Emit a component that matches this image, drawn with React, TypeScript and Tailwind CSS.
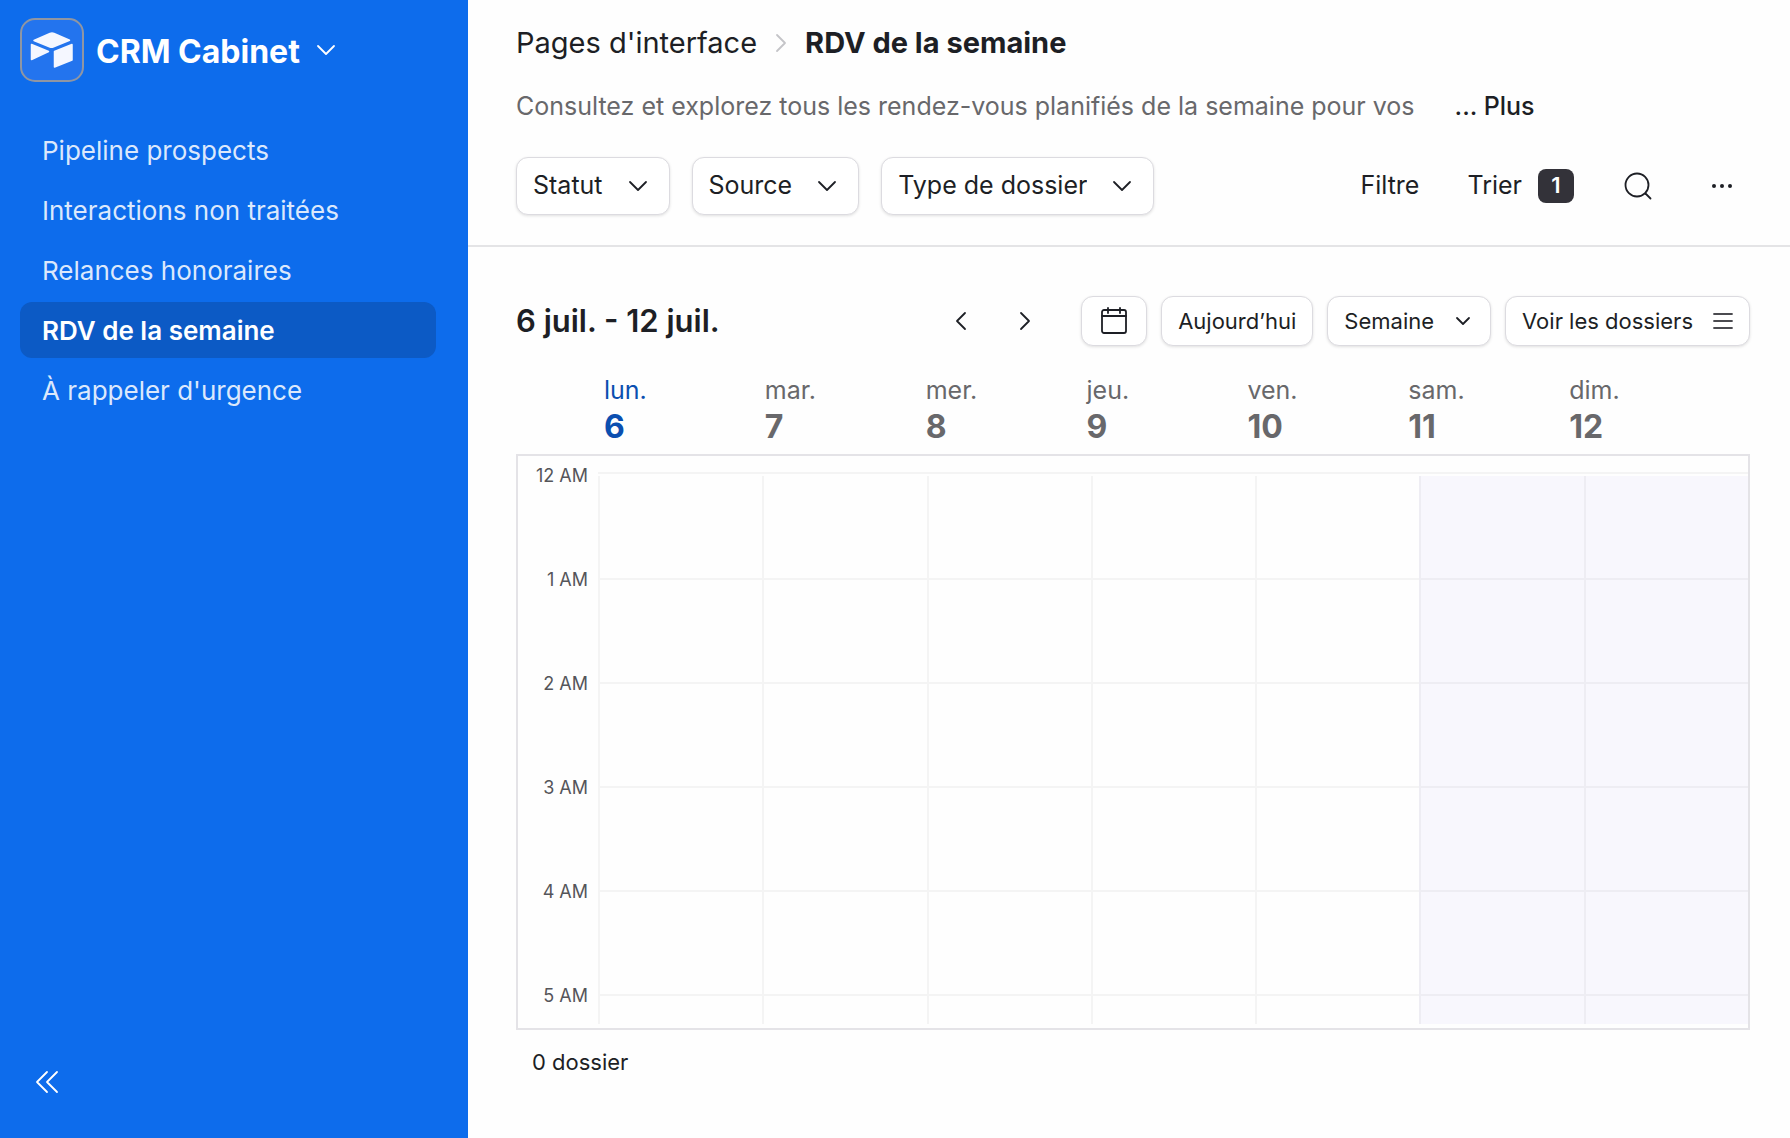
import { ReactNode } from "react";

const pages = [
  "Pipeline prospects",
  "Interactions non traitées",
  "Relances honoraires",
  "RDV de la semaine",
  "À rappeler d'urgence",
];

const filters = ["Statut", "Source", "Type de dossier"];

const days = [
  { name: "lun.", date: 6 },
  { name: "mar.", date: 7 },
  { name: "mer.", date: 8 },
  { name: "jeu.", date: 9 },
  { name: "ven.", date: 10 },
  { name: "sam.", date: 11 },
  { name: "dim.", date: 12 },
];

const hours = ["12 AM", "1 AM", "2 AM", "3 AM", "4 AM", "5 AM"];

const outlined = "rounded-xl border border-[#dcdbe0] bg-white shadow-[0_1px_3px_rgba(0,0,0,0.12)]";

function Icon({ w, h, className = "", children }: { w: number; h: number; className?: string; children: ReactNode }) {
  return (
    <svg
      width={w}
      height={h}
      viewBox={`0 0 ${w} ${h}`}
      fill="none"
      stroke="currentColor"
      strokeWidth="1.8"
      strokeLinecap="round"
      strokeLinejoin="round"
      className={"shrink-0 " + className}
      aria-hidden="true"
    >
      {children}
    </svg>
  );
}

function Sidebar() {
  return (
    <aside className="flex w-[468px] shrink-0 flex-col bg-[#0d6cec] pr-8 pl-5 text-white">
      <button type="button" className="mt-[18px] flex h-16 items-center gap-3 self-start">
        <svg width="64" height="64" viewBox="0 0 64 64" aria-hidden="true">
          <rect x="1" y="1" width="62" height="62" rx="14" fill="#2374ee" stroke="#8f96a3" strokeWidth="2" />
          <g fill="#f5f7ff" stroke="#f5f7ff" strokeWidth="1.5" strokeLinejoin="round">
            <path d="M14 22.5 30 15.500Q32 14.700 34 15.500L49.500 22.200 33 29Q31.500 29.600 30 29Z" />
            <path d="M11.500 26.500 28.500 33.500 11.500 41.500Z" />
            <path d="M34.500 33.500 52 26.500V42L34.500 49Z" />
          </g>
        </svg>
        <span className="pt-1 text-[32px] font-bold">CRM Cabinet</span>
        <Icon w={20} h={12} className="ml-1">
          <path d="m2 2 8 8 8-8" />
        </Icon>
      </button>

      <nav className="mt-10 flex flex-col gap-1">
        {pages.map((page) => (
          <a
            key={page}
            href="#"
            className={
              "flex h-14 items-center rounded-xl px-[22px] text-[26px] " +
              (page === "RDV de la semaine" ? "bg-[#0c5ac5] font-semibold" : "text-[#dbe8fc]")
            }
          >
            {page}
          </a>
        ))}
      </nav>

      <button type="button" aria-label="Réduire la barre latérale" className="mt-auto mb-11 ml-[15px] self-start">
        <Icon w={24} h={24}>
          <path d="M12 2 2 12l10 10M22 2 12 12l10 10" />
        </Icon>
      </button>
    </aside>
  );
}

function Header() {
  return (
    <header className="shrink-0 border-b-2 border-[#e4e4e6] pr-14 pl-12">
      <div className="flex h-[86px] items-center text-[29px]">
        <a href="#">Pages d'interface</a>
        <Icon w={12} h={20} className="mx-[18px] text-[#c4c4c8]">
          <path d="m2 2 8 8-8 8" />
        </Icon>
        <h1 className="font-bold">RDV de la semaine</h1>
      </div>
      <p className="flex h-[42px] items-center gap-10 text-[25px] whitespace-nowrap text-[#68686b]">
        Consultez et explorez tous les rendez-vous planifiés de la semaine pour vos
        <button type="button" className="font-medium text-[#1d1f25]">... Plus</button>
      </p>

      <div className="flex h-[117px] items-center pb-[2px]">
        <div className="flex gap-[22px]">
          {filters.map((filter) => (
            <div key={filter} className="relative flex items-center">
              <select
                aria-label={filter}
                className={"field-sizing-content h-[58px] appearance-none pr-[66px] pl-4 text-[25px] " + outlined}
              >
                <option>{filter}</option>
              </select>
              <Icon w={20} h={12} className="pointer-events-none absolute right-[22px]">
                <path d="m2 2 8 8 8-8" />
              </Icon>
            </div>
          ))}
        </div>
        <div className="ml-auto flex items-center text-[25px]">
          <button type="button">Filtre</button>
          <button type="button" className="ml-12 flex items-center gap-4">
            Trier
            <span className="flex h-[34px] w-9 items-center justify-center rounded-lg bg-[#333239] text-[22px] font-semibold text-white">
              1
            </span>
          </button>
          <button type="button" aria-label="Rechercher" className="ml-12">
            <Icon w={30} h={30}>
              <circle cx="15" cy="14" r="11.500" />
              <path d="m23.500 22.500 5 5" />
            </Icon>
          </button>
          <button type="button" aria-label="Plus d'options" className="ml-[58px]">
            <svg width="24" height="24" viewBox="0 0 24 24" fill="currentColor" aria-hidden="true">
              <circle cx="4" cy="12" r="2" />
              <circle cx="12" cy="12" r="2" />
              <circle cx="20" cy="12" r="2" />
            </svg>
          </button>
        </div>
      </div>
    </header>
  );
}

function Toolbar() {
  return (
    <div className="mt-12 flex h-[52px] items-center">
      <h2 className="text-[31px] font-semibold">6 juil. - 12 juil.</h2>
      <div className="ml-auto flex items-center gap-[14px] text-[22px]">
        <div className="mr-9 flex gap-[52px]">
          <button type="button" aria-label="Semaine précédente">
            <Icon w={12} h={20}>
              <path d="m10 2-8 8 8 8" />
            </Icon>
          </button>
          <button type="button" aria-label="Semaine suivante">
            <Icon w={12} h={20}>
              <path d="m2 2 8 8-8 8" />
            </Icon>
          </button>
        </div>
        <button type="button" aria-label="Choisir une date" className={"flex h-[50px] w-[66px] items-center justify-center " + outlined}>
          <Icon w={26} h={28}>
            <rect x="1" y="3" width="24" height="23" rx="2" />
            <path d="M1 9h24M7 1v5M19 1v5" />
          </Icon>
        </button>
        <button type="button" className={"h-[50px] px-4 " + outlined}>Aujourd’hui</button>
        <div className="relative flex items-center">
          <select aria-label="Période" className={"field-sizing-content h-[50px] appearance-none pr-14 pl-4 " + outlined}>
            <option>Semaine</option>
          </select>
          <Icon w={16} h={10} className="pointer-events-none absolute right-5">
            <path d="m2 2 6 6 6-6" />
          </Icon>
        </div>
        <button type="button" className={"flex h-[50px] items-center gap-5 px-4 " + outlined}>
          Voir les dossiers
          <Icon w={20} h={16} className="text-[#4b4b50]">
            <path d="M1 1h18M1 8h18M1 15h18" />
          </Icon>
        </button>
      </div>
    </div>
  );
}

function WeekCalendar() {
  return (
    <>
      <div className="grid shrink-0 grid-cols-7 pt-[25px] pr-5 pb-2 pl-[88px] text-[#68686b]">
        {days.map((day, i) => (
          <div key={day.date} className={i === 0 ? "text-[#0b4fb0]" : ""}>
            <div className="text-[25px] leading-9">{day.name}</div>
            <div className="text-[32px] leading-[38px] font-bold">{day.date}</div>
          </div>
        ))}
      </div>

      <div className="flex min-h-0 flex-1 overflow-hidden border-2 border-[#e4e3e7]">
        <div className="w-20 shrink-0 pt-1 pr-[10px] text-right text-[18px] text-[#55555a]">
          {hours.map((hour) => (
            <div key={hour} className="h-[104px] leading-8">{hour}</div>
          ))}
        </div>
        <div className="mt-4 mb-1 grid flex-1 grid-cols-7 overflow-hidden border-t-2 border-black/4 pt-[2px]">
          {days.map((day, i) => (
            <div key={day.date} className={"border-l-2 border-black/4 " + (i > 4 ? "bg-[#f8f7fd]" : "")}>
              {hours.map((hour) => (
                <div key={hour} className="h-[104px] border-b-2 border-black/4"></div>
              ))}
            </div>
          ))}
        </div>
      </div>
    </>
  );
}

export default function App() {
  return (
    <div className="flex h-screen bg-[#fefefe] font-['Inter',sans-serif] text-[#1d1f25]">
      <Sidebar />
      <main className="flex min-w-0 flex-1 flex-col">
        <Header />
        <section className="flex min-h-0 flex-1 flex-col pr-10 pl-12">
          <Toolbar />
          <WeekCalendar />
          <footer className="h-[108px] shrink-0 px-4 pt-4 text-[22px] leading-8">0 dossier</footer>
        </section>
      </main>
    </div>
  );
}
